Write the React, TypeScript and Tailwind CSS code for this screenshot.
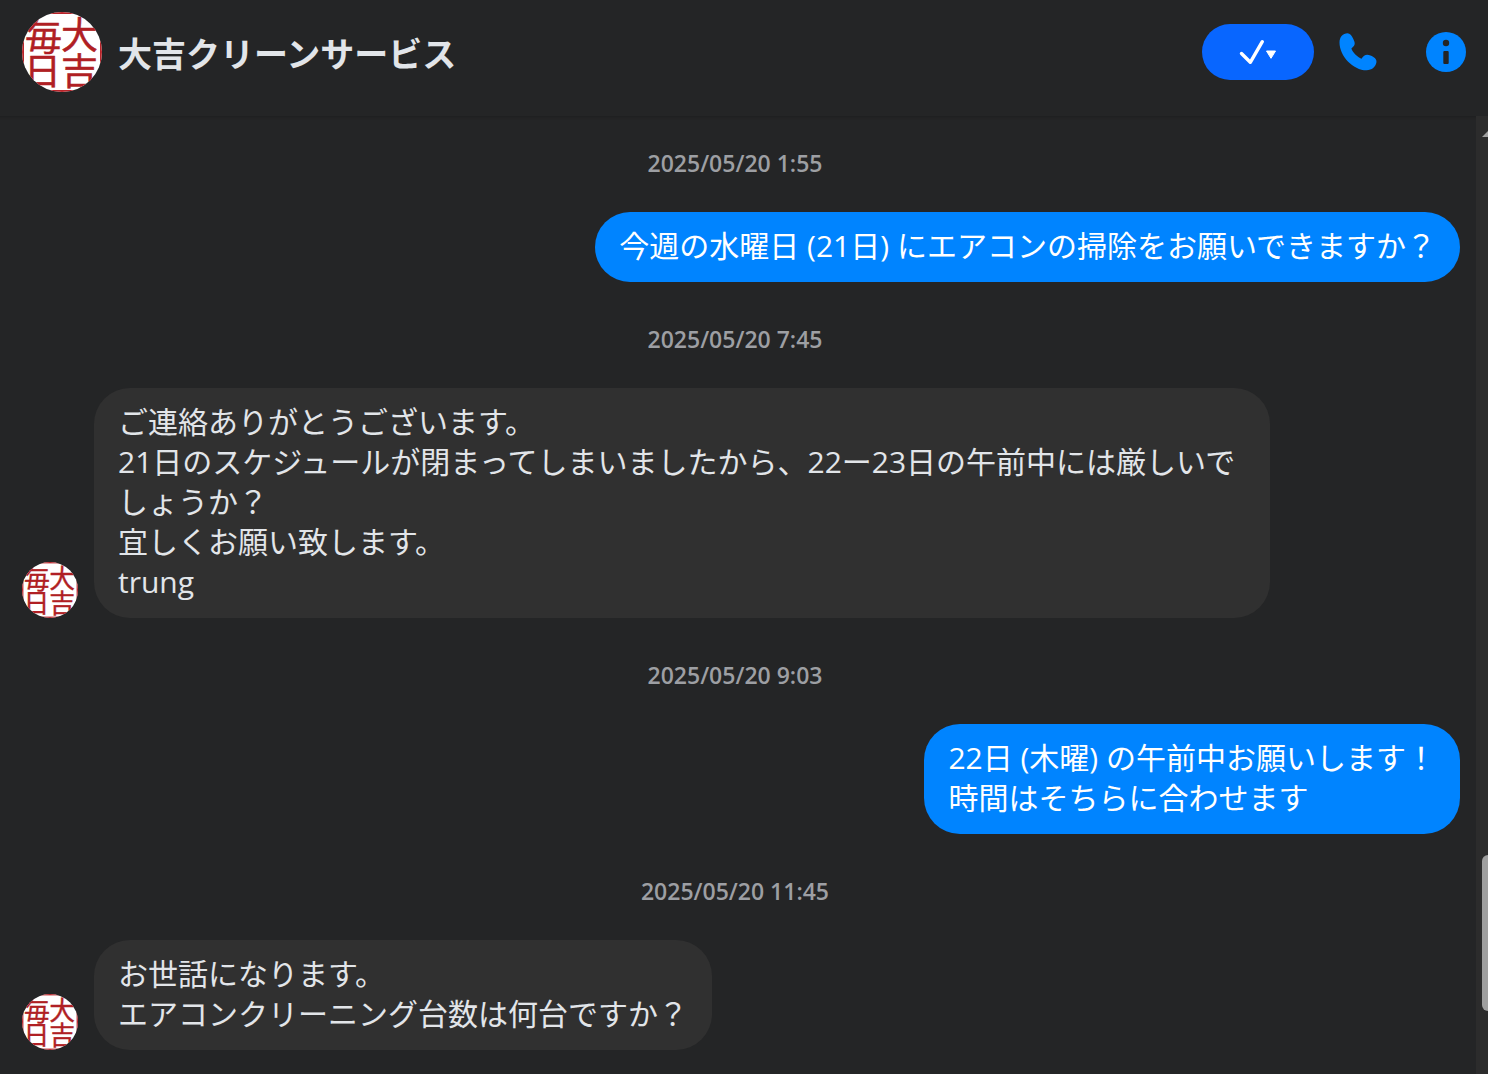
import React from "react";

const FONT =
  "font-['Open_Sans','Noto_Sans_CJK_JP',sans-serif]";

type Group = {
  date: string;
  mine: boolean;
  lines: string[];
};

const groups: Group[] = [
  {
    date: "2025/05/20 1:55",
    mine: true,
    lines: ["今週の水曜日 (21日) にエアコンの掃除をお願いできますか？"],
  },
  {
    date: "2025/05/20 7:45",
    mine: false,
    lines: [
      "ご連絡ありがとうございます。",
      "21日のスケジュールが閉まってしまいましたから、22ー23日の午前中には厳しいでしょうか？",
      "宜しくお願い致します。",
      "trung",
    ],
  },
  {
    date: "2025/05/20 9:03",
    mine: true,
    lines: ["22日 (木曜) の午前中お願いします！", "時間はそちらに合わせます"],
  },
  {
    date: "2025/05/20 11:45",
    mine: false,
    lines: ["お世話になります。", "エアコンクリーニング台数は何台ですか？"],
  },
];

// 印鑑のアイコン
const Seal = ({ className }: { className: string }) => (
  <svg
    viewBox="0 0 80 80"
    role="img"
    aria-label="大吉クリーンサービス"
    className={`shrink-0 rounded-full bg-white ${className}`}
  >
    <rect x="0" y="0" width="80" height="80" fill="none" stroke="#b8242a" strokeWidth="4" />
    <g
      fill="#b01f24"
      stroke="#b01f24"
      strokeWidth="0.500"
      strokeLinejoin="round"
      className="font-['Noto_Sans_CJK_JP',sans-serif] font-normal"
      fontSize="37"
    >
      <text x="3" y="39">毎</text>
      <text x="39" y="37">大</text>
      <text x="2" y="73">日</text>
      <text x="39" y="73">吉</text>
    </g>
  </svg>
);

const Header = () => {
  return (
    <header className="flex h-[116px] items-start justify-between px-[22px] pt-3">
      <div className="flex items-center gap-4">
        <Seal className="size-20" />
        <h1 className="mt-1 text-[34px] leading-[48px] font-bold text-[#e2e5e9]">
          大吉クリーンサービス
        </h1>
      </div>
      <div className="flex h-20 items-center">
        <button
          type="button"
          aria-label="完了にする"
          className="flex h-14 w-28 items-center justify-center rounded-full bg-[#0866ff]"
        >
          <svg width="38" height="26" viewBox="0 0 38 26" fill="none">
            <path
              d="M2.500 14.500 11.300 23.300 23.300 2.700"
              stroke="#fff"
              strokeWidth="3.400"
              strokeLinecap="round"
              strokeLinejoin="round"
            />
            <path d="M27.500 12h9L32 19.300z" fill="#fff" stroke="#fff" strokeLinejoin="round" />
          </svg>
        </button>
        <button type="button" aria-label="音声通話" className="ml-6 size-10">
          <svg width="40" height="40" viewBox="0 0 40 40" fill="#0084ff">
            <path d="M9.500 1.300C12 1.300 13.600 3.500 15.200 6.800C17.500 11.500 17.400 13.500 13.400 16.500C14.500 20 19.500 25.500 23.500 26.700C26 23 28.500 21.700 32.500 23.600C36 25.200 39.200 27.200 38.400 30.600C37.600 35 34 38.300 28.500 38.300C15 38.300 1.500 24 1.500 10.500C1.500 5 5 1.300 9.500 1.300Z" />
          </svg>
        </button>
        <button type="button" aria-label="詳細" className="ml-12 size-10">
          <svg width="40" height="40" viewBox="0 0 40 40">
            <circle cx="20" cy="20" r="20" fill="#0084ff" />
            <circle cx="20" cy="11" r="3.200" fill="#242526" />
            <rect x="17.300" y="19" width="5.400" height="13" rx="1" fill="#242526" />
          </svg>
        </button>
      </div>
    </header>
  );
};

const Message = ({ item }: { item: Group }) => {
  const text = item.lines.map((line) => <p key={line}>{line}</p>);
  if (item.mine) {
    return (
      <div className="flex justify-end">
        <div className="rounded-[36px] bg-[#0084ff] px-6 pt-[14px] pb-4 text-[30px] leading-10 text-white">
          {text}
        </div>
      </div>
    );
  }
  return (
    <div className="flex items-end gap-4 pl-3 pr-[190px]">
      <Seal className="size-14" />
      <div className="rounded-[36px] bg-[#303030] px-6 pt-[14px] pb-4 text-[30px] leading-10 text-[#e2e5e9]">
        {text}
      </div>
    </div>
  );
};

export default function App() {
  return (
    <div className={`flex min-h-screen flex-col bg-[#242526] ${FONT}`}>
      <Header />
      <div className="flex grow">
        <main className="flex grow flex-col gap-[10px] pl-[10px] pr-4 shadow-[inset_0_4px_3px_-3px_rgba(0,0,0,0.2)]">
          {groups.map((item) => (
            <section key={item.date}>
              <time className="block pt-[31px] pb-[33px] text-center text-[23px] leading-8 font-semibold text-[#9d9fa3]">
                {item.date}
              </time>
              <Message item={item} />
            </section>
          ))}
        </main>
        {/* スクロールバー */}
        <div className="flex w-3 shrink-0 flex-col items-end bg-[#2c2c2c] pt-[15px]">
          <svg width="6" height="6" viewBox="0 0 6 6" fill="#9f9f9f">
            <path d="M6 0v6H0z" />
          </svg>
          <div className="mt-[718px] h-[156px] w-[6px] rounded-l-[6px] bg-[#9f9f9f]" />
        </div>
      </div>
    </div>
  );
}
